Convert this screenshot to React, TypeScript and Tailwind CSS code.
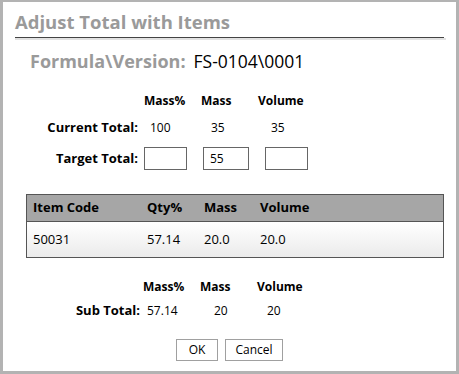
const font = { fontFamily: '"Open Sans", "Noto Sans", sans-serif' }

const cols = ["Mass%", "Mass", "Volume"]

export default function App() {
  return (
    <div
      className="flex h-[374px] w-[459px] flex-col border-[3px] border-t-2 border-[#b3b3b3] bg-white text-[12px] text-black"
      style={font}
    >
      {/* Title */}
      <div className="mt-[8px] pl-[12px] text-[18.5px] font-bold leading-[24px] text-[#9a9a9a]">
        Adjust Total with Items
      </div>
      <div className="ml-[12px] mt-[3px] w-[429px]">
        <div className="h-px bg-[#444]" />
        <div className="h-[2px] w-[431px] bg-[#e2e2e2]" />
      </div>

      {/* Formula */}
      <div className="mt-[9px] flex items-center pl-[27px] leading-[24px]">
        <span className="text-[18px] font-bold text-[#9a9a9a]">Formula\Version:</span>
        <span className="ml-[8px] text-[17.5px]">FS-0104\0001</span>
      </div>

      {/* Totals */}
      <div className="mt-[19px] flex h-[18px] items-center font-bold">
        <div className="w-[141px]" />
        {cols.map((c) => (
          <div key={c} className="w-[57px]">
            {c}
          </div>
        ))}
      </div>
      <div className="mt-[9px] flex h-[18px] items-center">
        <div className="w-[135px] text-right text-[13px] font-bold">Current Total:</div>
        <div className="w-[6px]" />
        <div className="w-[57px] pl-[6px]">100</div>
        <div className="w-[57px] pl-[10px]">35</div>
        <div className="w-[57px] pl-[13px]">35</div>
      </div>
      <div className="mt-[10px] flex h-[23px] items-center">
        <div className="w-[135px] text-right text-[13px] font-bold">Target Total:</div>
        <div className="w-[6px]" />
        <input className="h-[23px] w-[43px] border border-[#666] px-[6px] outline-none" />
        <input
          className="ml-[16px] h-[23px] w-[46px] border border-[#666] px-[6px] outline-none"
          defaultValue="55"
        />
        <input className="ml-[16px] h-[23px] w-[43px] border border-[#666] px-[6px] outline-none" />
      </div>

      {/* Items table */}
      <div className="ml-[23px] mt-[24px] w-[418px] border border-[#555] text-[13px]">
        <div className="flex h-[27px] items-center border-b border-[#555] bg-[#a6a6a6] font-bold">
          <div className="w-[120px] pl-[6px]">Item Code</div>
          <div className="w-[57px]">Qty%</div>
          <div className="w-[56px]">Mass</div>
          <div>Volume</div>
        </div>
        <div className="flex h-[35px] items-center bg-gradient-to-b from-white to-[#ebebeb]">
          <div className="w-[120px] pl-[6px]">50031</div>
          <div className="w-[57px]">57.14</div>
          <div className="w-[56px]">20.0</div>
          <div>20.0</div>
        </div>
      </div>

      {/* Sub totals */}
      <div className="mt-[20px] flex h-[18px] items-center font-bold">
        <div className="w-[140px]" />
        {cols.map((c) => (
          <div key={c} className="w-[57px]">
            {c}
          </div>
        ))}
      </div>
      <div className="mt-[6px] flex h-[18px] items-center">
        <div className="w-[137px] text-right text-[13px] font-bold">Sub Total:</div>
        <div className="w-[7px]" />
        <div className="w-[57px]">57.14</div>
        <div className="w-[60px] pl-[10px]">20</div>
        <div className="pl-[3px]">20</div>
      </div>

      {/* Buttons */}
      <div className="mt-[19px] flex justify-center gap-[7px]">
        <button className="h-[22px] w-[42px] border border-[#a0a0a0] bg-white text-[12px] leading-none">
          OK
        </button>
        <button className="h-[22px] w-[58px] border border-[#a0a0a0] bg-white text-[12px] leading-none">
          Cancel
        </button>
      </div>
    </div>
  )
}
